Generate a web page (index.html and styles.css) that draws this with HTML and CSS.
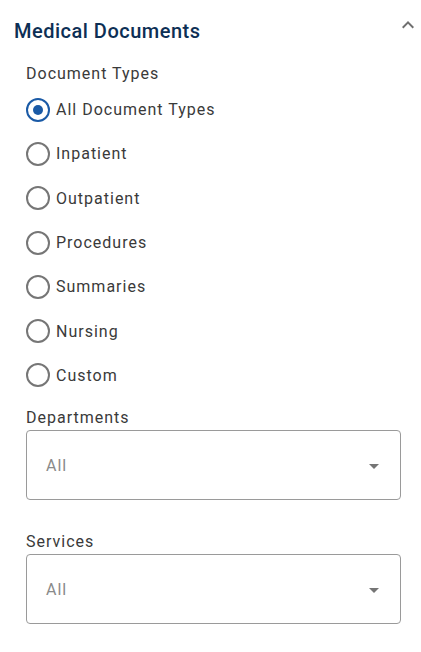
FILE: index.html
```html
<!DOCTYPE html>
<html>
<head>
<meta charset="utf-8">
<link rel="stylesheet" href="styles.css">
</head>
<body>
<div class="panel">
  <div class="header">
    <h2 class="title">Medical Documents</h2>
    <svg class="chev" width="24" height="24" viewBox="0 0 24 24"><path d="M12 8l-6 6 1.41 1.41L12 10.83l4.59 4.58L18 14z" fill="#6f6f6f"/></svg>
  </div>
  <div class="body">
    <div class="label">Document Types</div>
    <div class="radios">
      <label class="radio"><span class="circle checked"></span><span>All Document Types</span></label>
      <label class="radio"><span class="circle"></span><span>Inpatient</span></label>
      <label class="radio"><span class="circle"></span><span>Outpatient</span></label>
      <label class="radio"><span class="circle"></span><span>Procedures</span></label>
      <label class="radio"><span class="circle"></span><span>Summaries</span></label>
      <label class="radio"><span class="circle"></span><span>Nursing</span></label>
      <label class="radio"><span class="circle"></span><span>Custom</span></label>
    </div>
    <div class="field first">
      <div class="label">Departments</div>
      <div class="select"><span>All</span><svg width="24" height="24" viewBox="0 0 24 24"><path d="M7 10l5 5 5-5z" fill="#757575"/></svg></div>
    </div>
    <div class="field">
      <div class="label">Services</div>
      <div class="select"><span>All</span><svg width="24" height="24" viewBox="0 0 24 24"><path d="M7 10l5 5 5-5z" fill="#757575"/></svg></div>
    </div>
  </div>
</div>
</body>
</html>
```

FILE: styles.css
```css
* { box-sizing: border-box; }
body {
  margin: 0;
  background: #fff;
  font-family: Roboto, "Liberation Sans", sans-serif;
  color: #333;
}
.panel { width: 421px; }
.header {
  display: flex;
  align-items: center;
  justify-content: space-between;
  padding: 19px 1px 0 14px;
  height: 43px;
}
.title {
  margin: 0;
  font-size: 20px;
  line-height: 24px;
  font-weight: 500;
  letter-spacing: 0.5px;
  color: #0d2f55;
}
.chev { margin-top: -12px; }
.body { padding: 20.5px 20px 0 26px; }
.label {
  font-size: 16px;
  line-height: 20px;
  letter-spacing: 1px;
  color: #3a3a3a;
}
.radios { margin-top: 4px; display: flex; flex-direction: column; }
.radio {
  display: flex;
  align-items: center;
  height: 44.3px;
  font-size: 16px;
  letter-spacing: 1px;
  color: #3a3a3a;
  gap: 6px;
}
.circle {
  width: 24px;
  height: 24px;
  border: 2px solid #767676;
  border-radius: 50%;
  display: flex;
  align-items: center;
  justify-content: center;
  flex: none;
}
.circle.checked { border-color: #1a5aa6; }
.circle.checked::after {
  content: "";
  width: 10px;
  height: 10px;
  border-radius: 50%;
  background: #1a5aa6;
}
.field { margin-top: 31.5px; }
.field.first { margin-top: 10px; }
.select {
  margin-top: 2.5px;
  height: 70px;
  border: 1px solid #9a9a9a;
  border-radius: 4px;
  display: flex;
  align-items: center;
  justify-content: space-between;
  padding: 0 14px 0 19px;
  font-size: 16px;
  letter-spacing: 1px;
  color: #8a8a8a;
}
.select svg { margin-top: 2px; }
```
